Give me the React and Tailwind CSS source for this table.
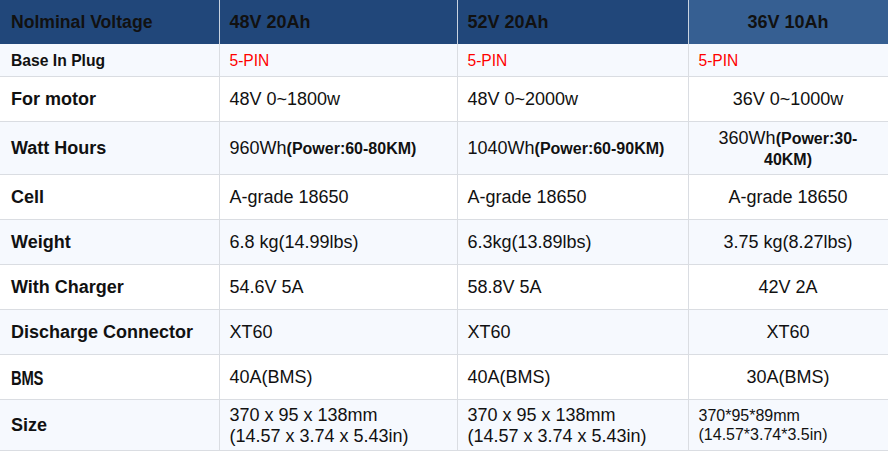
const rows = [
  {
    label: "Base In Plug",
    small: true,
    h: "h-[32px]",
    cells: [
      <span className="text-[15.6px] text-[#ff0000]">5-PIN</span>,
      <span className="text-[15.6px] text-[#ff0000]">5-PIN</span>,
      <span className="text-[15.6px] text-[#ff0000]">5-PIN</span>,
    ],
    leftLast: true,
  },
  { label: "For motor", h: "h-[45px]", cells: ["48V 0~1800w", "48V 0~2000w", "36V 0~1000w"] },
  {
    label: "Watt Hours",
    h: "h-[53px]",
    cells: [
      <>960Wh<b className="text-[16px]">(Power:60-80KM)</b></>,
      <>1040Wh<b className="text-[16px]">(Power:60-90KM)</b></>,
      <span className="block leading-[20px]">
        360Wh<b className="text-[16px] leading-[20px]">(Power:30-40KM)</b>
      </span>,
    ],
  },
  { label: "Cell", h: "h-[45px]", cells: ["A-grade 18650", "A-grade 18650", "A-grade 18650"] },
  { label: "Weight", h: "h-[45px]", cells: ["6.8 kg(14.99lbs)", "6.3kg(13.89lbs)", "3.75 kg(8.27lbs)"] },
  { label: "With Charger", h: "h-[45px]", cells: ["54.6V 5A", "58.8V 5A", "42V 2A"] },
  { label: "Discharge Connector", h: "h-[45px]", cells: ["XT60", "XT60", "XT60"] },
  { label: "BMS", narrow: true, h: "h-[45px]", cells: ["40A(BMS)", "40A(BMS)", "30A(BMS)"] },
  {
    label: "Size",
    h: "h-[51px]",
    cells: [
      <span className="block leading-[20.5px]">370 x 95 x 138mm<br />(14.57 x 3.74 x 5.43in)</span>,
      <span className="block leading-[20.5px]">370 x 95 x 138mm<br />(14.57 x 3.74 x 5.43in)</span>,
      <span className="block text-[16px] leading-[18.5px]">370*95*89mm<br />(14.57*3.74*3.5in)</span>,
    ],
    leftLast: true,
  },
];

function App() {
  return (
    <div className="w-[888px] h-[453px] bg-white overflow-hidden font-['Liberation_Sans',Arial,sans-serif] text-[#111]">
      <table className="w-[888px] table-fixed border-collapse">
        <colgroup>
          <col className="w-[219px]" />
          <col className="w-[238px]" />
          <col className="w-[231px]" />
          <col className="w-[200px]" />
        </colgroup>
        <thead>
          <tr className="h-[44px] text-[18px] font-bold">
            <th className="bg-[#21477a] text-left pl-[11px] border-r border-[#c9d3e0] text-[17.6px]">
              Nolminal Voltage
            </th>
            <th className="bg-[#21477a] text-left pl-[10px] border-r border-[#c9d3e0]">
              48V 20Ah
            </th>
            <th className="bg-[#21477a] text-left pl-[10px] border-r border-[#c9d3e0]">
              52V 20Ah
            </th>
            <th className="bg-[#365f92] text-center border-r border-[#d9dde3]">
              36V 10Ah
            </th>
          </tr>
        </thead>
        <tbody>
          {rows.map((row, i) => (
            <tr
              key={row.label}
              className={`${row.h} ${i % 2 === 0 ? "bg-[#f6f9fe]" : "bg-white"}`}
            >
              <td
                className={`pl-[11px] pt-[2px] border-b border-r border-[#dadde2] font-bold ${
                  row.small ? "text-[15.7px]" : "text-[18px]"
                }`}
              >
                {row.narrow ? (
                  <span className="inline-block text-[20px] font-bold scale-x-[0.74] origin-left tracking-[-0.3px]">
                    {row.label}
                  </span>
                ) : (
                  row.label
                )}
              </td>
              <td className="pl-[10px] pt-[2px] border-b border-r border-[#dadde2] text-[18px]">
                {row.cells[0]}
              </td>
              <td className="pl-[10px] pt-[2px] border-b border-r border-[#dadde2] text-[18px]">
                {row.cells[1]}
              </td>
              <td
                className={`pt-[2px] border-b border-r border-[#dadde2] text-[18px] ${
                  row.leftLast ? "text-left pl-[10px]" : "text-center px-[10px]"
                }`}
              >
                {row.cells[2]}
              </td>
            </tr>
          ))}
        </tbody>
      </table>
    </div>
  );
}

export default App;
